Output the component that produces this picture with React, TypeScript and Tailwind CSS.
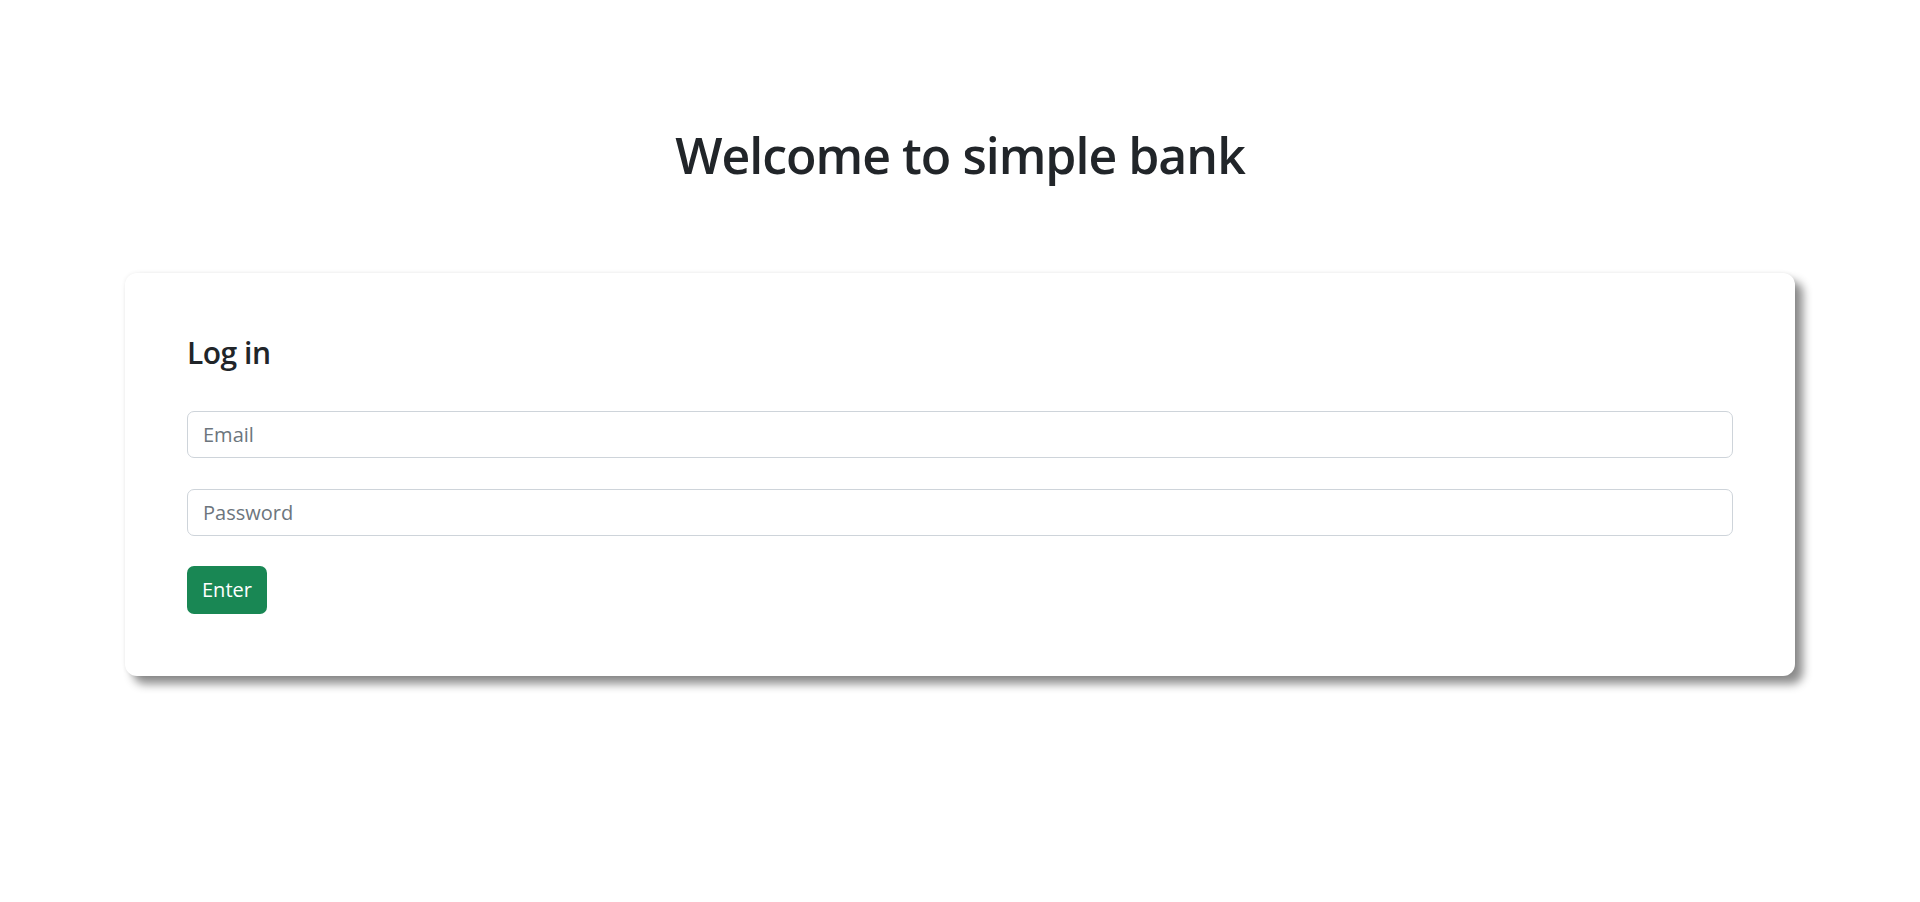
import { useState } from "react";

/**
 * Simple bank — log in screen.
 */

const fontStack = "font-['Open_Sans','Noto_Sans',sans-serif]";

export default function App() {
  const [email, setEmail] = useState("");
  const [password, setPassword] = useState("");

  return (
    <div className={`min-h-screen bg-white text-[#212529] ${fontStack}`}>
      <h1 className="pt-[125px] text-center text-[50px] leading-[60px] font-semibold tracking-[-1px]">
        Welcome to simple bank
      </h1>

      <div className="mx-auto mt-[88px] w-[1670px] rounded-[12px] bg-white p-[62px] shadow-[8px_8px_10px_rgba(0,0,0,0.45),0_0_4px_rgba(0,0,0,0.08)]">
        <h4 className="mb-[40px] text-[30px] leading-[36px] font-semibold tracking-[-0.5px]">Log in</h4>

        <input
          type="email"
          value={email}
          onChange={(e) => setEmail(e.target.value)}
          placeholder="Email"
          className="block h-[47px] w-full rounded-[7px] border border-[#ced4da] bg-white px-[15px] text-[20px] text-[#212529] outline-none placeholder:text-[#6c757d]"
        />
        <input
          type="password"
          value={password}
          onChange={(e) => setPassword(e.target.value)}
          placeholder="Password"
          className="mt-[31px] block h-[47px] w-full rounded-[7px] border border-[#ced4da] bg-white px-[15px] text-[20px] text-[#212529] outline-none placeholder:text-[#6c757d]"
        />

        <button
          type="button"
          className="mt-[30px] block h-[48px] rounded-[7px] bg-[#198754] px-[15px] text-[20px] text-white"
        >
          Enter
        </button>
      </div>
    </div>
  );
}
